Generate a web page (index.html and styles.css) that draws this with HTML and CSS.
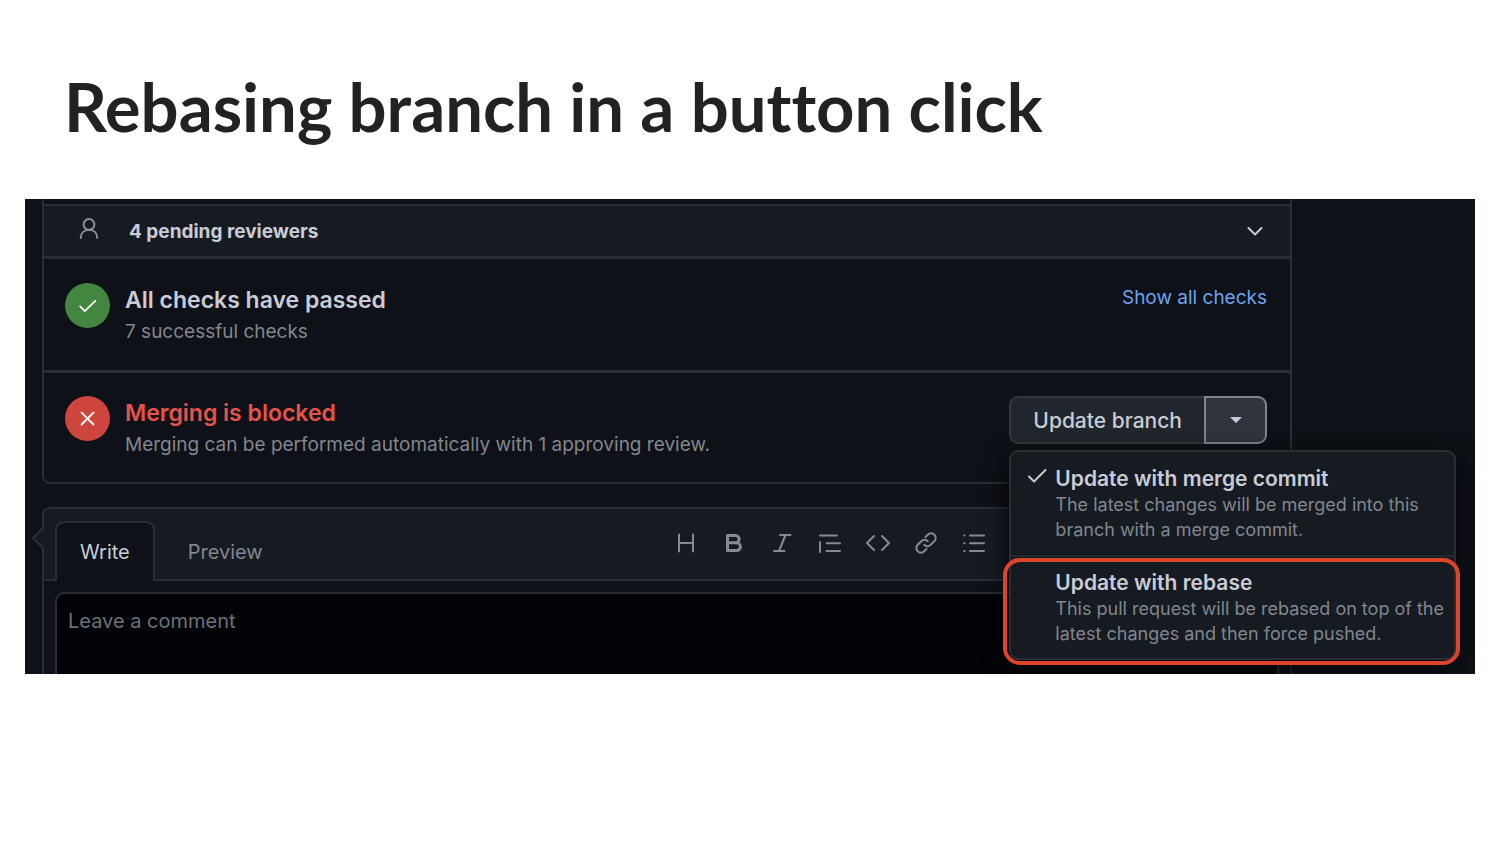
FILE: index.html
```html
<!DOCTYPE html>
<html lang="en">
<head>
<meta charset="utf-8">
<title>Rebasing branch in a button click</title>
<meta name="viewport" content="width=device-width, initial-scale=1">
<link rel="stylesheet" href="styles.css">
</head>
<body>
<main class="slide">
  <h1 class="slide-title">Rebasing branch in a button click</h1>
  <section class="shot">
    <div class="merge-box">
      <button class="reviewers" type="button">
        <svg class="icon reviewers-icon" viewBox="0 0 24 24"><circle cx="12" cy="7.5" r="5.4"/><path d="M3.8 21c0-5 3.4-8.2 8.2-8.2s8.2 3.200 8.200 8.200"/></svg>
        <span class="reviewers-label">4 pending reviewers</span>
        <svg class="icon chevron" viewBox="0 0 24 24"><path d="M5.500 9l6.500 6.500L18.500 9"/></svg>
      </button>
      <div class="status">
        <span class="badge badge-ok"><svg class="icon" viewBox="0 0 24 24"><path d="M3.500 12.500l5 5L20 6.500"/></svg></span>
        <div class="status-text">
          <h2 class="status-title">All checks have passed</h2>
          <p class="status-note">7 successful checks</p>
        </div>
        <a class="show-all" href="#">Show all checks</a>
      </div>
      <div class="status status-last">
        <span class="badge badge-bad"><svg class="icon" viewBox="0 0 24 24"><path d="M5 5l13 13M18 5L5 18"/></svg></span>
        <div class="status-text">
          <h2 class="status-title title-bad">Merging is blocked</h2>
          <p class="status-note">Merging can be performed automatically with 1 approving review.</p>
        </div>
        <div class="split">
          <button class="split-main" type="button">Update branch</button>
          <button class="split-more" type="button" aria-label="Choose update method" aria-expanded="true"><svg class="caret" viewBox="0 0 12 6"><path d="M0 0h12L6 6z"/></svg></button>
          <div class="menu">
            <button class="menu-item" type="button">
              <svg class="icon menu-check" viewBox="0 0 24 24"><path d="M4 12.500l5 5L20.500 6"/></svg>
              <span class="menu-body">
                <span class="menu-title">Update with merge commit</span>
                <span class="menu-note">The latest changes will be merged into this branch with a merge commit.</span>
              </span>
            </button>
            <button class="menu-item menu-item-marked" type="button">
              <span class="menu-body">
                <span class="menu-title">Update with rebase</span>
                <span class="menu-note">This pull request will be rebased on top of the latest changes and then force pushed.</span>
              </span>
            </button>
          </div>
        </div>
      </div>
    </div>
    <form class="comment">
      <svg class="pointer" viewBox="0 0 12 22"><path d="M12 0L1 11l11 11"/></svg>
      <div class="comment-head">
        <div class="tabs">
          <button class="tab tab-active" type="button">Write</button>
          <button class="tab" type="button">Preview</button>
        </div>
        <div class="tools">
          <button class="tool" type="button" aria-label="Heading"><svg class="icon" viewBox="0 0 24 24"><path d="M5 3.500v17M19 3.500v17M5 12h14"/></svg></button>
          <button class="tool" type="button" aria-label="Bold"><svg class="icon heavy" viewBox="0 0 24 24"><path d="M5.500 4.500h8a3.600 3.600 0 0 1 0 7.300h-8zM5.500 11.800h9a3.900 3.900 0 0 1 0 7.800h-9z"/></svg></button>
          <button class="tool" type="button" aria-label="Italic"><svg class="icon" viewBox="0 0 24 24"><path d="M10 4h10.500M4 20h10.500M15.500 4L9 20"/></svg></button>
          <button class="tool" type="button" aria-label="Quote"><svg class="icon" viewBox="0 0 24 24"><path d="M2 4.500h17M2 11v10M8.500 12.200h13.500M8.500 20h13.500"/></svg></button>
          <button class="tool" type="button" aria-label="Code"><svg class="icon" viewBox="0 0 24 24"><path d="M8 5l-7 7 7 7M16 5l7 7-7 7"/></svg></button>
          <button class="tool" type="button" aria-label="Link"><svg class="icon" viewBox="0 0 24 24"><path d="M10.200 13.800a4.600 4.600 0 0 0 6.500 0l3.600-3.600a4.500 4.500 0 0 0-6.500-6.500l-2.400 2.400M13.800 10.200a4.600 4.600 0 0 0-6.500 0l-3.600 3.600a4.500 4.500 0 0 0 6.500 6.500l2.400-2.400"/></svg></button>
          <button class="tool" type="button" aria-label="Bulleted list"><svg class="icon" viewBox="0 0 24 24"><path d="M8 4.500h14M8 12.200h14M8 20h14M2.200 4.500h.4M2.200 12.200h.4M2.200 20h.4"/></svg></button>
        </div>
      </div>
      <div class="comment-body">
        <textarea class="comment-input" aria-label="Comment" placeholder="Leave a comment"></textarea>
      </div>
    </form>
  </section>
</main>
</body>
</html>
```
FILE: styles.css
```css
* { box-sizing: border-box; }
body { margin: 0; background: #fff; font-family: Inter, "Liberation Sans", sans-serif; }
h1, h2, p { margin: 0; }
button, textarea { font: inherit; margin: 0; border: 0; background: none; }
button { cursor: pointer; padding: 0; }

.slide { padding: 66px 25px 0; }
.slide-title {
  padding: 0 39px;
  font: 700 67px/80px Lato, "Open Sans", sans-serif;
  font-variant-ligatures: none;
  color: #222;
}
.shot {
  margin-top: 53px;
  padding: 0 183px 0 17px;
  background: #0e1117;
  overflow: hidden;
}
.icon {
  display: block;
  width: 24px;
  height: 24px;
  flex: none;
  fill: none;
  stroke: currentColor;
  stroke-width: 2;
  stroke-linecap: round;
  stroke-linejoin: round;
}

.merge-box {
  border: 2px solid #2b2d35;
  border-top: 0;
  border-radius: 0 0 8px 8px;
  padding-top: 5px;
}
.reviewers {
  display: flex;
  align-items: center;
  width: 100%;
  height: 52px;
  padding: 0 23px 0 33px;
  border-top: 2px solid #2b2d35;
  background: #161b22;
  color: #c9ccd6;
  text-align: left;
}
.reviewers-icon { color: #8b8f98; margin-bottom: 4px; }
.reviewers-label { flex: 1; padding-left: 28px; font-size: 19px; font-weight: 700; }
.chevron { stroke-width: 2; }
.status {
  display: flex;
  align-items: flex-start;
  gap: 15px;
  min-height: 114px;
  padding: 24px 23px 0 21px;
  border-top: 3px solid #2b2d35;
}
.status-last { min-height: 112px; padding-top: 23px; }
.badge {
  display: grid;
  place-items: center;
  width: 45px;
  height: 45px;
  flex: none;
  border-radius: 50%;
  color: #fff;
}
.badge .icon { width: 22px; height: 22px; stroke-width: 2; }
.badge-ok { background: #43863f; }
.badge-bad { background: #cd453c; }
.status-text { flex: 1; }
.status-title { font-size: 23px; line-height: 34px; font-weight: 600; color: #c9ccd6; }
.title-bad { color: #e5534b; }
.status-note { font-size: 19px; line-height: 30px; color: #82868e; }
.show-all { font-size: 19px; line-height: 30px; color: #6ea3f0; text-decoration: none; }

.split { position: relative; display: flex; height: 48px; }
.split-main {
  padding: 0 22px;
  border: 2px solid #33363d;
  border-right: 0;
  border-radius: 9px 0 0 9px;
  background: #21262d;
  color: #c9ccd6;
  font-size: 21px;
  font-weight: 500;
}
.split-more {
  display: grid;
  place-items: center;
  width: 63px;
  border: 2px solid #80848c;
  border-radius: 0 9px 9px 0;
  background: #30343c;
  color: #c9ccd6;
}
.caret { width: 12px; height: 6px; fill: currentColor; }
.menu {
  position: absolute;
  z-index: 2;
  top: 54px;
  left: 0;
  width: 447px;
  border: 2px solid #2b2d35;
  border-radius: 9px;
  background: #161b22;
  box-shadow: 0 8px 24px #010409;
}
.menu-item {
  position: relative;
  display: flex;
  width: 100%;
  height: 103px;
  padding: 13px 8px 0 44px;
  text-align: left;
}
.menu-item-marked { padding-top: 12px; border-top: 2px solid #22262d; }
.menu-item-marked::after {
  content: "";
  position: absolute;
  inset: 1px -6px -7px -8px;
  border: 4px solid #dc452c;
  border-radius: 17px;
}
.menu-check { position: absolute; top: 12px; left: 14px; color: #c9ccd6; }
.menu-title { display: block; font-size: 21px; line-height: 27px; font-weight: 600; color: #c9ccd6; }
.menu-note { display: block; font-size: 18px; line-height: 25px; color: #82868e; }

.comment {
  position: relative;
  margin-top: 23px;
  border: 2px solid #2b2d35;
  border-bottom: 0;
  border-radius: 8px 8px 0 0;
}
.pointer {
  position: absolute;
  top: 18px;
  left: -12px;
  width: 12px;
  height: 22px;
  fill: #161b22;
  stroke: #2b2d35;
  stroke-width: 2;
}
.comment-head {
  display: flex;
  justify-content: space-between;
  padding: 12px 304px 0 11px;
  border-bottom: 2px solid #2b2d35;
  border-radius: 7px 7px 0 0;
  background: #161b22;
}
.tabs { display: flex; gap: 8px; margin-bottom: -2px; }
.tab {
  height: 60px;
  padding: 0 23px;
  border: 2px solid transparent;
  border-bottom: 0;
  font-size: 20px;
  color: #82868e;
}
.tab-active {
  border-color: #2b2d35;
  border-radius: 9px 9px 0 0;
  background: #0e1117;
  color: #c9ccd6;
}
.tools { display: flex; gap: 24px; padding-top: 10px; }
.tool { width: 24px; height: 24px; color: #868a93; }
.tools .icon { width: 24px; height: 24px; }
.tools .heavy { stroke-width: 3; }
.comment-body { padding: 11px 11px 0; }
.comment-input {
  display: block;
  width: 100%;
  height: 82px;
  padding: 13px 11px;
  border: 2px solid #2b2d35;
  border-bottom: 0;
  border-radius: 9px 9px 0 0;
  background: #010307;
  color: #c9ccd6;
  font-size: 20px;
  line-height: 28px;
  resize: none;
}
.comment-input::placeholder { color: #6d7178; opacity: 1; }
```
